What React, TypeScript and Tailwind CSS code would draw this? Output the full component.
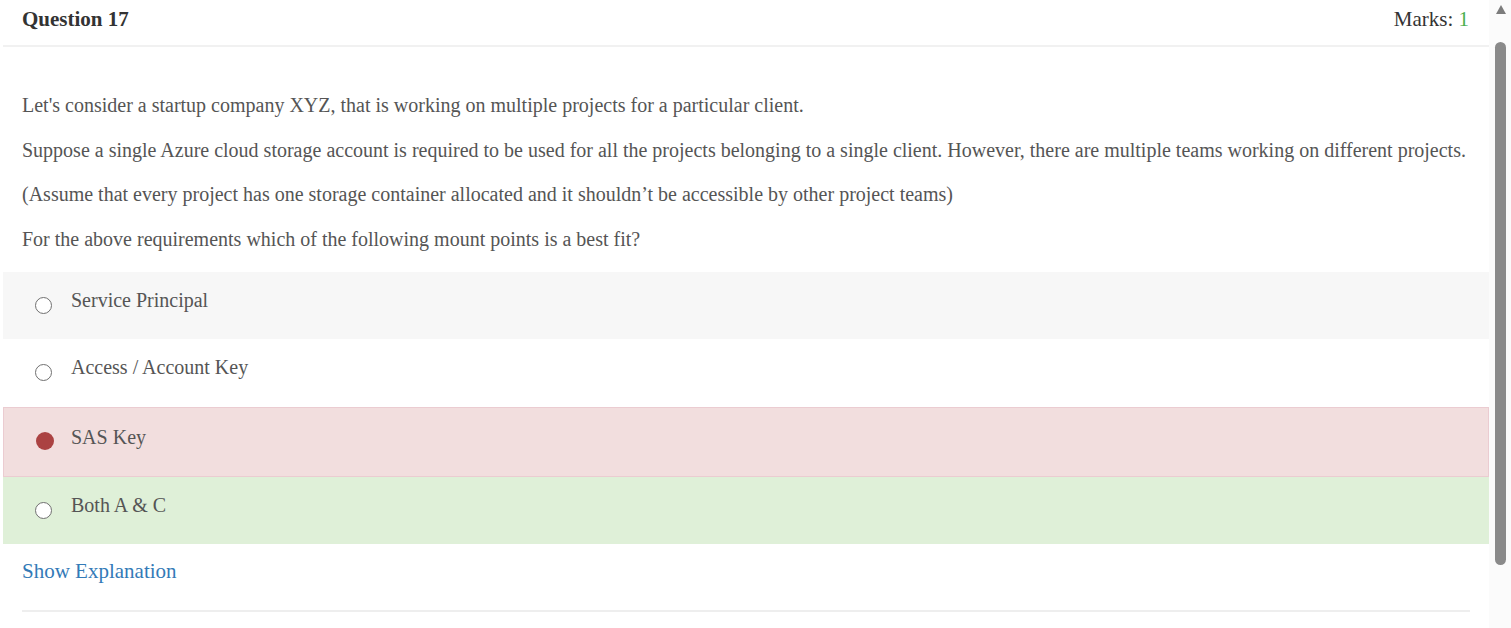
const paragraphs = [
  "Let's consider a startup company XYZ, that is working on multiple projects for a particular client.",
  "Suppose a single Azure cloud storage account is required to be used for all the projects belonging to a single client. However, there are multiple teams working on different projects.",
  "(Assume that every project has one storage container allocated and it shouldn\u2019t be accessible by other project teams)",
  "For the above requirements which of the following mount points is a best fit?",
];

type Option = {
  label: string;
  tone: "plain" | "muted" | "wrong" | "right";
  checked?: boolean;
};

const options: Option[] = [
  { label: "Service Principal", tone: "muted" },
  { label: "Access / Account Key", tone: "plain" },
  { label: "SAS Key", tone: "wrong", checked: true },
  { label: "Both A & C", tone: "right" },
];

const toneClass: Record<Option["tone"], string> = {
  plain: "bg-white h-[68px]",
  muted: "bg-[#f7f7f7] h-[67px]",
  wrong: "bg-[#f2dede] border border-[#ebccd1] h-[70px]",
  right: "bg-[#dff0d8] h-[67px]",
};

function Radio({ checked }: { checked?: boolean }) {
  if (checked) {
    return <span className="mt-[24px] ml-[32px] block h-[18px] w-[18px] shrink-0 rounded-full bg-[#ab4242]" />;
  }
  return (
    <span className="mt-[25px] ml-[32px] block h-[17px] w-[17px] shrink-0 rounded-full border-[1.5px] border-[#707070] bg-white" />
  );
}

function Scrollbar() {
  return (
    <div className="flex w-[22px] shrink-0 flex-col items-center bg-[#fbfbfb] pl-[1px]">
      <svg viewBox="0 0 10 9" className="mt-[5px] h-[9px] w-[10px]" aria-hidden="true">
        <path d="M5 0L10 9H0z" fill="#7c7c7c" />
      </svg>
      <div className="mt-[28px] h-[523px] w-[11px] rounded-full bg-[#8a8a8a]" />
    </div>
  );
}

export default function App() {
  return (
    <div className="flex h-[628px] overflow-hidden bg-white font-['Liberation_Serif','Times_New_Roman',serif]">
      <div className="ml-[3px] flex-1">
        <div className="flex h-[47px] items-start justify-between border-b-2 border-[#f1f1f1] pl-[19px] pr-[20px] pt-[6px]">
          <h2 className="text-[21px] font-bold leading-[26px] text-[#333]">Question 17</h2>
          <span className="text-[21px] leading-[26px] text-[#333]">
            Marks: <span className="text-[#4caf50]">1</span>
          </span>
        </div>

        <div className="space-y-[18.6px] pl-[19px] pt-[45px] text-[20px] leading-[26px] text-[#555]">
          {paragraphs.map((p) => (
            <p key={p}>{p}</p>
          ))}
        </div>

        <div className="mt-[20px]">
          {options.map((o) => (
            <div key={o.label} className={`flex items-start ${toneClass[o.tone]}`}>
              <Radio checked={o.checked} />
              <span
                className={`text-[20px] leading-[26px] text-[#555] ${
                  o.checked ? "ml-[17px] pt-[16px]" : "ml-[19px] pt-[15px]"
                }`}
              >
                {o.label}
              </span>
            </div>
          ))}
        </div>

        <div className="pl-[19px] pt-[14px]">
          <a href="#" className="text-[21px] leading-[26px] text-[#337ab7]">
            Show Explanation
          </a>
        </div>
        <div className="ml-[19px] mr-[19px] mt-[25px] border-t-2 border-[#eeeeee]" />
      </div>
      <Scrollbar />
    </div>
  );
}
